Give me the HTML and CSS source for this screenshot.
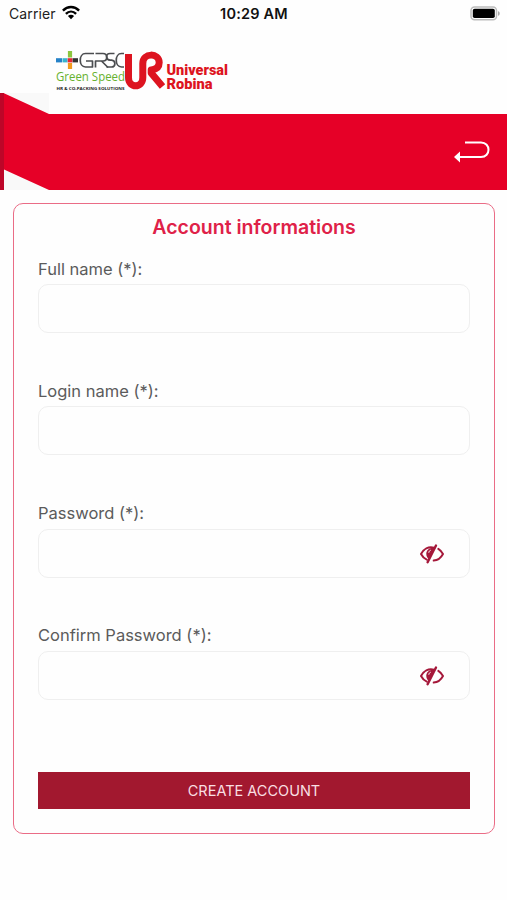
FILE: index.html
```html
<!DOCTYPE html>
<html lang="en">
<head>
<meta charset="utf-8">
<meta name="viewport" content="width=device-width, initial-scale=1">
<title>Account informations</title>
<link rel="stylesheet" href="styles.css">
</head>
<body>
<svg class="defs" aria-hidden="true">
  <symbol id="eye-off" viewBox="0 0 26 22">
    <g fill="none" stroke="#a5183a" stroke-width="2" stroke-linecap="round" stroke-linejoin="round">
      <path d="M15 4.800C9.500 3 4.600 6.200 2 11c1.400 2.700 3.300 4.600 5.800 5.700"/>
      <path d="M19.300 5.900c2 1.200 3.500 3 4.700 5.100-2.400 4.400-5.800 6.400-9.300 6.600"/>
      <path d="M17 2.500 8.600 19.300" stroke-width="2.400"/>
    </g>
    <path d="M15.500 4.800C10.500 4 7.200 7.300 7.300 11c0 2 .9 3.800 2.400 5z" fill="#a5183a"/>
    <path d="M9.800 9.800c.1-1.500.8-2.300 2-2.600" fill="none" stroke="#fff" stroke-width=".9"/>
  </symbol>
</svg>
<div class="status">
  <div class="carrier">
    <span>Carrier</span>
    <svg width="18" height="15" viewBox="0 0 18 15">
      <g fill="none" stroke="#000" stroke-width="2.400">
        <path d="M.9 5.600C5.600.8 12.400.8 17.100 5.600"/>
        <path d="M3.900 8.900c3-3 7.200-3 10.200 0"/>
      </g>
      <path d="M9 14.200 5.900 11c1.800-1.700 4.400-1.700 6.200 0z"/>
    </svg>
  </div>
  <span class="time">10:29 AM</span>
  <svg class="battery" width="31" height="15" viewBox="0 0 31 15">
    <rect x="1" y="1" width="25.500" height="12.800" rx="3.500" fill="#fff" stroke="#bcbcbc" stroke-width="1.500"/>
    <rect x="2.800" y="2.800" width="22" height="9.200" rx="1.800"/>
    <path d="M28 5.200c2.300.5 2.300 4 0 4.500z" fill="#aaa"/>
  </svg>
</div>
<header class="brand">
  <svg width="180" height="48" viewBox="52 46 180 48">
    <g stroke-width="4.200">
      <path d="M56 60.300h6" stroke="#2582c8"/>
      <path d="M62.500 60.300h5" stroke="#38b3cf"/>
      <path d="M72.500 60.300h5.500" stroke="#333"/>
      <path d="M70 51v6.500" stroke="#8cc63f"/>
      <path d="M70 63V69" stroke="#f39a1e"/>
      <path d="M67.700 60.300h4.600" stroke="#e52535"/>
    </g>
    <g fill="none" stroke="#4b4d50" stroke-width="1.700" stroke-linejoin="round">
      <path d="M94 53.500H85.500c-7 0-7 13.500 0 13.500h7v-6H86"/>
      <path d="M95.500 67.500v-6.500h7.500c5 0 5-7.500 0-7.500h-7.500M101.500 61l6.500 6.500"/>
      <path d="M114.500 53.500h-4.500c-4.500 0-4.500 6.500 0 6.700h1.500c4.500.3 4.500 6.800 0 6.800h-5"/>
      <path d="M124 53.500h-2.500c-7 0-7 13.500 0 13.500h2.500"/>
    </g>
    <text class="green" x="56" y="81" textLength="69" lengthAdjust="spacingAndGlyphs">Green Speed</text>
    <text class="tag" x="56.500" y="90" textLength="68" lengthAdjust="spacingAndGlyphs">HR &amp; CO-PACKING SOLUTIONS</text>
    <path d="M128.500 54v23.500c0 11 14.300 11 14.300 0V63.500c0-11 16.400-11 16.400-1 0 4.500-3 7-8 7.500v3L162.500 86.500" fill="none" stroke="#dd1420" stroke-width="7" stroke-linejoin="round"/>
    <text class="ur" x="166.500" y="75.300" textLength="61.500" lengthAdjust="spacingAndGlyphs">Universal</text>
    <text class="ur" x="166.500" y="88.600" textLength="46" lengthAdjust="spacingAndGlyphs">Robina</text>
  </svg>
</header>
<div class="banner">
  <svg class="ribbon" width="507" height="98" viewBox="0 0 507 98">
    <path d="M0 0h49v97H0z" fill="#f9f9f9"/>
    <path d="M0 0h4v97H0z" fill="#bd0628"/>
    <path d="M4 .2 49 21H507v76H49L4 76.500z" fill="#e60027"/>
  </svg>
  <svg class="back" width="38" height="24" viewBox="0 0 38 24">
    <path d="M12 2.500h16c10 0 10 14.500 0 14.500H4" fill="none" stroke="#fff" stroke-width="2"/>
    <path d="M1 17l6-5.500v11z" fill="#fff"/>
  </svg>
</div>
<main class="card">
  <h1>Account informations</h1>
  <form>
    <div class="field"><label for="full">Full name (*):</label><div class="box"><input id="full" type="text"></div></div>
    <div class="field"><label for="login">Login name (*):</label><div class="box"><input id="login" type="text"></div></div>
    <div class="field"><label for="pass">Password (*):</label><div class="box"><input id="pass" type="password"><svg width="26" height="22"><use href="#eye-off"/></svg></div></div>
    <div class="field"><label for="confirm">Confirm Password (*):</label><div class="box"><input id="confirm" type="password"><svg width="26" height="22"><use href="#eye-off"/></svg></div></div>
    <button type="button">CREATE ACCOUNT</button>
  </form>
</main>
</body>
</html>
```

FILE: styles.css
```css
* { box-sizing: border-box; }
body {
  margin: 0;
  height: 900px;
  overflow: hidden;
  background: #fefefe;
  font-family: Inter, "Liberation Sans", sans-serif;
}
svg { display: block; }
.defs { position: absolute; width: 0; height: 0; }
.status {
  height: 27px;
  padding: 0 6px 0 9px;
  display: grid;
  grid-template-columns: 1fr auto 1fr;
  align-items: center;
  font-size: 14px;
  color: #222;
}
.carrier { display: flex; align-items: center; gap: 6px; letter-spacing: 0.1px; }
.carrier svg { margin-top: -2px; }
.time { font-weight: 600; font-size: 14.500px; letter-spacing: 0.2px; margin-right: 2px; color: #111; }
.battery { justify-self: end; margin-top: -1px; }
.brand { height: 66px; padding: 19px 0 0 52px; }
.green { font: 13px "Open Sans", sans-serif; fill: #67b12e; }
.tag { font: 700 4.200px "Open Sans", sans-serif; fill: #222; }
.ur { font: 900 14px Roboto, sans-serif; fill: #dd1420; }
.banner { display: grid; height: 98px; }
.ribbon, .back { grid-area: 1 / 1; }
.back { justify-self: end; margin: 47px 16px 0 0; }
.card {
  width: 482px;
  height: 631px;
  margin: 11.500px 0 0 13px;
  padding: 10px 24px 0;
  border: 1px solid #ea6c86;
  border-radius: 10px;
}
h1 {
  margin: 0 0 17px;
  text-align: center;
  font-size: 19.500px;
  line-height: 26px;
  font-weight: 600;
  color: #df2148;
}
.field { height: 122.200px; }
label {
  display: block;
  height: 27.800px;
  line-height: 24px;
  font-size: 16.500px;
  color: #5b5b5b;
}
.box {
  height: 49px;
  display: flex;
  align-items: center;
  padding: 0 24px 0 12px;
  border: 1px solid #efefef;
  border-radius: 10px;
}
.box svg { margin-top: 2px; }
input {
  flex: 1;
  min-width: 0;
  height: 40px;
  border: 0;
  outline: 0;
  background: transparent;
  font: inherit;
}
button {
  display: block;
  width: 432px;
  height: 37px;
  margin-top: 26.700px;
  padding: 0;
  border: 0;
  background: #a2182f;
  color: #f9dfe2;
  font: 14.500px Inter, sans-serif;
}
```
